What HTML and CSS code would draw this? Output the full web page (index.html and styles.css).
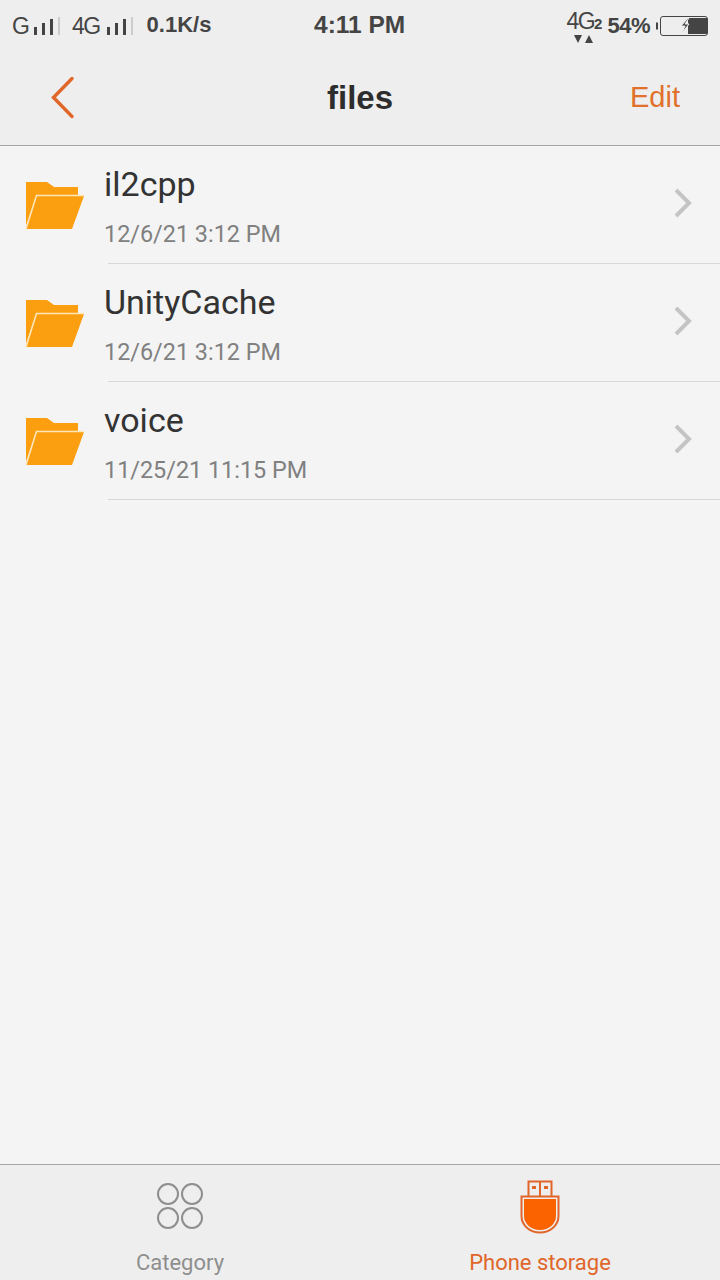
FILE: index.html
```html
<!DOCTYPE html>
<html lang="en">
<head>
    <meta charset="UTF-8">
    <meta name="viewport" content="width=device-width, initial-scale=1.0">
    <title>files</title>
    <link rel="stylesheet" href="styles.css">
</head>
<body>
    <div class="page">
        <!-- status bar -->
        <div class="status">
            <div class="status-left">
                <span class="net">G</span>
                <svg class="bars" width="28" height="20" viewBox="0 0 28 20"><path d="M1 12h3v8H1zM9 8h3v12H9zM17 4h3v16h-3z" fill="#444"/><path d="M25 2h2v18h-2z" fill="#ccc"/></svg>
                <span class="net net-4g">4G</span>
                <svg class="bars" width="28" height="20" viewBox="0 0 28 20"><path d="M1 12h3v8H1zM9 8h3v12H9zM17 4h3v16h-3z" fill="#444"/><path d="M25 2h2v18h-2z" fill="#ccc"/></svg>
                <span class="speed">0.1K/s</span>
            </div>
            <div class="clock">4:11 PM</div>
            <div class="status-right">
                <span class="net-two">
                    <span class="net-two-label">4G<small>2</small></span>
                    <svg class="net-arrows" width="20" height="8" viewBox="0 0 20 8"><path d="M0 0h8L4 8zM11 8h8l-4-8z" fill="#444"/></svg>
                </span>
                <span class="percent">54%</span>
                <svg class="battery" width="54" height="20" viewBox="0 0 54 20">
                    <path d="M3 6.500h-2v7h2z" fill="#444"/>
                    <rect x="5.500" y="0.500" width="47" height="19" rx="2.500" fill="none" stroke="#444"/>
                    <path d="M33 2h19v16H33z" fill="#444"/>
                    <path d="M33 2l-7 8h4l-3 7 7-9h-4l4-6z" fill="#444" stroke="#eee" stroke-width="1"/>
                </svg>
            </div>
        </div>
        <!-- title bar -->
        <div class="header">
            <svg class="back" width="26" height="44" viewBox="0 0 26 44"><path d="M23 2.500L4.500 21.500l18.500 19" fill="none" stroke="#e0662a" stroke-width="3.400" stroke-linecap="round"/></svg>
            <h1 class="title">files</h1>
            <span class="edit">Edit</span>
        </div>
        <!-- folders -->
        <div class="list">
            <div class="row">
                <svg class="folder" width="60" height="50" viewBox="0 0 60 50"><use href="#folder-shape"/></svg>
                <div class="row-body">
                    <div class="row-text">
                        <div class="name">il2cpp</div>
                        <div class="date">12/6/21 3:12 PM</div>
                    </div>
                    <svg class="arrow" width="20" height="30" viewBox="0 0 20 30"><use href="#arrow-shape"/></svg>
                </div>
            </div>
            <div class="row">
                <svg class="folder" width="60" height="50" viewBox="0 0 60 50"><use href="#folder-shape"/></svg>
                <div class="row-body">
                    <div class="row-text">
                        <div class="name">UnityCache</div>
                        <div class="date">12/6/21 3:12 PM</div>
                    </div>
                    <svg class="arrow" width="20" height="30" viewBox="0 0 20 30"><use href="#arrow-shape"/></svg>
                </div>
            </div>
            <div class="row">
                <svg class="folder" width="60" height="50" viewBox="0 0 60 50"><use href="#folder-shape"/></svg>
                <div class="row-body">
                    <div class="row-text">
                        <div class="name">voice</div>
                        <div class="date">11/25/21 11:15 PM</div>
                    </div>
                    <svg class="arrow" width="20" height="30" viewBox="0 0 20 30"><use href="#arrow-shape"/></svg>
                </div>
            </div>
        </div>
        <!-- bottom tabs -->
        <div class="tabs">
            <div class="tab">
                <svg width="48" height="48" viewBox="0 0 48 48" fill="none" stroke="#8e8e8e" stroke-width="2"><circle cx="12" cy="12" r="10"/><circle cx="36" cy="12" r="10"/><circle cx="12" cy="36" r="10"/><circle cx="36" cy="36" r="10"/></svg>
                <span class="tab-label">Category</span>
            </div>
            <div class="tab tab-active">
                <svg width="40" height="55" viewBox="0 0 40 55">
                    <path d="M8.500 17V1.500h23V17M20 1.500V17" fill="none" stroke="#e0662a" stroke-width="2"/>
                    <path d="M12 6h4v3h-4zM24 6h4v3h-4z" fill="#e0662a"/>
                    <path d="M1.500 16.500h37V36a18.500 16.500 0 0 1-37 0z" fill="none" stroke="#e0662a" stroke-width="2"/>
                    <path d="M4 19h32v17a16 14 0 0 1-32 0z" fill="#fb6200"/>
                </svg>
                <span class="tab-label">Phone storage</span>
            </div>
        </div>
    </div>
    <svg class="defs" width="0" height="0">
        <symbol id="folder-shape" viewBox="0 0 60 50">
            <path d="M1 2h21l7 5h24v9H11L1 46z" fill="#fb9f10"/>
            <path d="M11 16h48l-12 33H1z" fill="#fb9f10"/>
            <path d="M1 49L11.500 15.500H59" fill="none" stroke="#fde6b8" stroke-width="1.500"/>
        </symbol>
        <symbol id="arrow-shape" viewBox="0 0 20 30">
            <path d="M3 2l13 13L3 28" fill="none" stroke="#c4c4c4" stroke-width="4"/>
        </symbol>
    </svg>
</body>
</html>
```

FILE: styles.css
```css
body{
    margin:0;
    background: #f4f4f4;
    font-family: Roboto, "Liberation Sans", sans-serif;
}
.page{
    width: 720px;
    height: 1280px;
    display: flex;
    flex-direction: column;
    overflow: hidden;
}
.defs{
    display: block;
    height: 0;
}
/* status bar */
.status{
    height: 50px;
    background: #eeeeee;
    color: #444444;
    display: flex;
    align-items: center;
    justify-content: space-between;
    padding: 0 11px 0 12px;
    box-sizing: border-box;
    position: relative;
}
.status-left, .status-right{
    display: flex;
    align-items: center;
}
.status-left{
    padding-top: 2px;
}
.bars{
    margin-top: -2px;
}
.net{
    font-family: "Liberation Sans", sans-serif;
    font-size: 23px;
    margin-right: 3px;
}
.net-4g{
    letter-spacing: -1.500px;
    margin-left: 11px;
    margin-right: 6px;
}
.speed{
    font-family: "Liberation Sans", sans-serif;
    font-weight: bold;
    font-size: 22px;
    margin-left: 13px;
    margin-top: -3px;
}
.clock{
    position: absolute;
    left: 314px;
    top: 11px;
    font-family: "Liberation Sans", sans-serif;
    font-weight: bold;
    font-size: 24.500px;
}
.status-right{
    gap: 5px;
    padding-top: 1px;
}
.net-two{
    display: flex;
    flex-direction: column;
    align-items: center;
    line-height: 24px;
}
.net-two-label{
    font-family: "Liberation Sans", sans-serif;
    font-size: 23px;
    letter-spacing: -1.500px;
}
.net-two-label small{
    font-size: 15px;
    font-weight: bold;
    letter-spacing: 0;
}
.net-arrows{
    margin-top: -1px;
}
.percent{
    font-family: "Liberation Sans", sans-serif;
    font-weight: bold;
    font-size: 22px;
    letter-spacing: -0.500px;
}
/* title bar */
.header{
    height: 96px;
    box-sizing: border-box;
    background: #eeeeee;
    border-bottom: 1px solid #a5a5a5;
    display: flex;
    align-items: center;
    justify-content: space-between;
    padding: 0 40px 0 49px;
    position: relative;
}
.title{
    position: absolute;
    left: 0;
    right: 0;
    margin: 0;
    text-align: center;
    font-family: "Liberation Sans", sans-serif;
    font-size: 33px;
    font-weight: bold;
    color: #2d2d2d;
}
.edit{
    font-family: "Liberation Sans", sans-serif;
    font-size: 29px;
    color: #e0702a;
}
/* list */
.list{
    flex: 1;
}
.row{
    display: flex;
    align-items: center;
    height: 118px;
    padding-left: 25px;
    box-sizing: border-box;
}
.folder{
    flex: none;
}
.row-body{
    flex: 1;
    align-self: stretch;
    display: flex;
    align-items: center;
    justify-content: space-between;
    margin-left: 19px;
    padding-right: 27px;
    position: relative;
}
.row-body::after{
    content: "";
    position: absolute;
    left: 4px;
    right: 0;
    bottom: 0;
    height: 1px;
    background: #d8d8d8;
}
.row-text{
    margin-top: 5px;
}
.name{
    font-size: 34px;
    line-height: 40px;
    color: #333333;
    margin-top: -2px;
}
.date{
    font-size: 23.400px;
    line-height: 30px;
    color: #808080;
    margin-top: 15px;
}
.arrow{
    margin-bottom: 4px;
}
/* tabs */
.tabs{
    height: 116px;
    box-sizing: border-box;
    background: #eeeeee;
    border-top: 1px solid #a5a5a5;
    display: flex;
}
.tab{
    flex: 1;
    display: flex;
    flex-direction: column;
    align-items: center;
    padding-top: 17px;
}
.tab-label{
    font-size: 22px;
    line-height: 28px;
    color: #8e8e8e;
    margin-top: 19px;
}
.tab-active{
    padding-top: 15px;
}
.tab-active .tab-label{
    color: #e0662a;
    margin-top: 14px;
}
```
